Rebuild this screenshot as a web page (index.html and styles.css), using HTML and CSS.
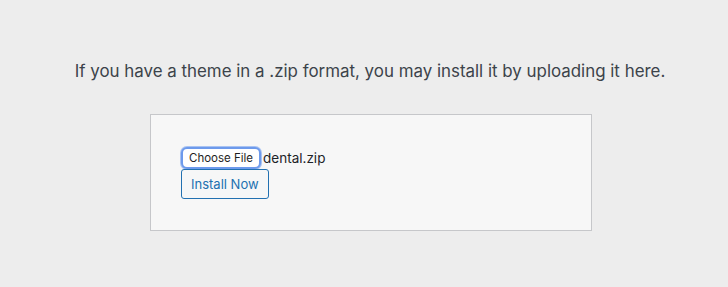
FILE: index.html
```html
<!DOCTYPE html>
<html>
<head>
<meta charset="utf-8">
<link rel="stylesheet" href="styles.css">
</head>
<body>
<div class="wrap">
  <p class="install-help">If you have a theme in a .zip format, you may install it by uploading it here.</p>
  <form class="upload-form">
    <div class="file-row">
      <span class="file-btn">Choose File</span>
      <span class="file-name">dental.zip</span>
    </div>
    <span class="button">Install Now</span>
  </form>
</div>
</body>
</html>
```
FILE: styles.css
```css
html, body {
  margin: 0;
  padding: 0;
  background: #ededed;
}
body {
  font-family: Inter, "Liberation Sans", Arial, sans-serif;
  color: #3c434a;
  width: 728px;
  height: 287px;
  overflow: hidden;
}
.wrap {
  padding-left: 12px;
}
.install-help {
  margin: 0;
  padding: 59px 0 0;
  text-align: center;
  font-size: 16.9px;
  line-height: 24px;
  color: #3c434a;
}
.upload-form {
  box-sizing: border-box;
  width: 442px;
  height: 117px;
  margin: 31px 0 0 calc(50% - 220px);
  padding: 32px 30px 0 30px;
  background: #f7f7f7;
  border: 1px solid #c6c7ca;
  display: flex;
  flex-direction: column;
  align-items: flex-start;
}
.file-row {
  display: flex;
  align-items: center;
  gap: 2px;
  margin-left: 0;
}
.file-btn {
  box-sizing: border-box;
  display: inline-block;
  height: 22px;
  padding: 0 6px;
  line-height: 18px;
  font-size: 11.5px;
  color: #1e1e1e;
  background: #fff;
  border: 2px solid #6d9aec;
  border-radius: 6px;
  box-shadow: 0 0 0 1px #a9c3f2;
}
.file-name {
  font-size: 13.5px;
  color: #1d2327;
}
.button {
  box-sizing: border-box;
  display: inline-block;
  margin-top: 0;
  height: 30px;
  line-height: 28px;
  padding: 0 9px;
  font-size: 13px;
  color: #2271b1;
  background: #f6f7f7;
  border: 1px solid #2271b1;
  border-radius: 3px;
}
```
